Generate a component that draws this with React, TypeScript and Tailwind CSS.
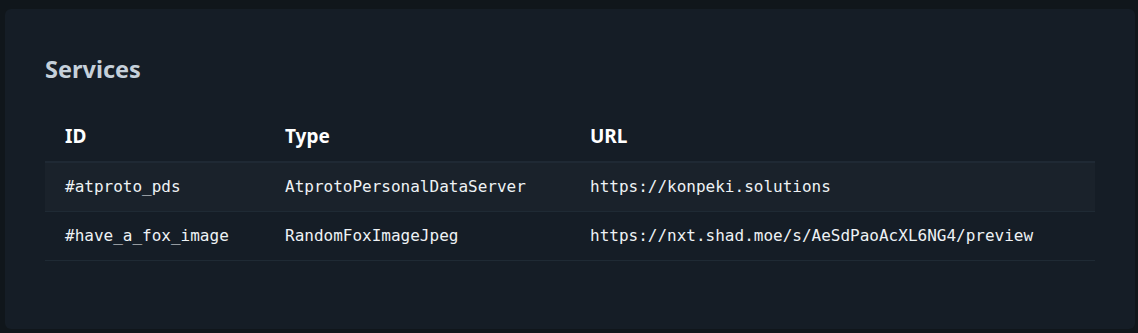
import React from "react";

const rows = [
  { id: "#atproto_pds", type: "AtprotoPersonalDataServer", url: "https://konpeki.solutions" },
  { id: "#have_a_fox_image", type: "RandomFoxImageJpeg", url: "https://nxt.shad.moe/s/AeSdPaoAcXL6NG4/preview" },
];

export default function App() {
  return (
    <div className="w-[1138px] h-[333px] bg-[#10161b] pt-[9px] pl-[5px] pr-[3px] pb-[4px]">
      <div className="h-[320px] rounded-md bg-[#151d26] pt-[45px] px-[40px]">
        <h2
          className="text-[23.5px] leading-[30px] font-bold text-[#c5d0da]"
          style={{ fontFamily: '"Noto Sans", "Open Sans", sans-serif' }}
        >
          Services
        </h2>
        <table className="mt-[28px] w-[1050px] border-collapse table-fixed">
          <colgroup>
            <col className="w-[220px]" />
            <col className="w-[305px]" />
            <col />
          </colgroup>
          <thead>
            <tr className="h-[50px] border-b-2 border-[#1f2934]">
              {["ID", "Type", "URL"].map((h) => (
                <th
                  key={h}
                  className="text-left pl-[20px] text-[19px] font-bold text-white align-middle"
                  style={{ fontFamily: '"Noto Sans", "Open Sans", sans-serif' }}
                >
                  {h}
                </th>
              ))}
            </tr>
          </thead>
          <tbody>
            {rows.map((r, i) => (
              <tr
                key={r.id}
                className={`h-[49px] border-b border-[#1f2a34] ${i === 0 ? "bg-[#1a222b]" : ""}`}
              >
                {[r.id, r.type, r.url].map((c, j) => (
                  <td
                    key={j}
                    className="pl-[20px] text-[16px] text-[#eef2f5] align-middle whitespace-nowrap"
                    style={{ fontFamily: '"DejaVu Sans Mono", monospace' }}
                  >
                    {c}
                  </td>
                ))}
              </tr>
            ))}
          </tbody>
        </table>
      </div>
    </div>
  );
}
